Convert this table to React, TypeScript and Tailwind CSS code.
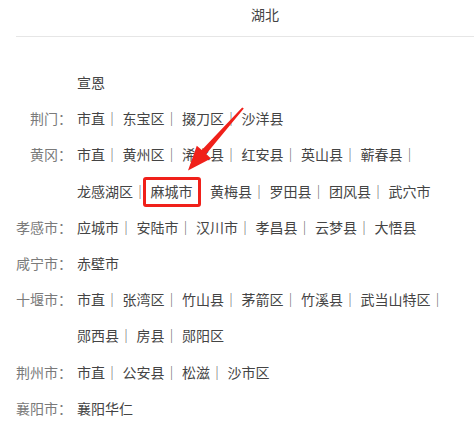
import React from 'react';

interface Region {
  label: string;
  items: string[];
  marked?: string;
}

const regions: Region[] = [
  { label: '', items: ['宣恩'] },
  { label: '荆门：', items: ['市直', '东宝区', '掇刀区', '沙洋县'] },
  {
    label: '黄冈：',
    items: ['市直', '黄州区', '浠水县', '红安县', '英山县', '蕲春县', '龙感湖区', '麻城市', '黄梅县', '罗田县', '团风县', '武穴市'],
    marked: '麻城市',
  },
  { label: '孝感市：', items: ['应城市', '安陆市', '汉川市', '孝昌县', '云梦县', '大悟县'] },
  { label: '咸宁市：', items: ['赤壁市'] },
  { label: '十堰市：', items: ['市直', '张湾区', '竹山县', '茅箭区', '竹溪县', '武当山特区', '郧西县', '房县', '郧阳区'] },
  { label: '荆州市：', items: ['市直', '公安县', '松滋', '沙市区'] },
  { label: '襄阳市：', items: ['襄阳华仁'] },
];

function RegionRow({ region }: { region: Region }) {
  return (
    <div className="flex leading-[36.2px]">
      <div className="w-[56px] shrink-0 text-right text-[#7a7a7a]">{region.label}</div>
      <div className="ml-[5px] flex w-[390px] flex-wrap text-[#444]">
        {region.items.map((item, i) => (
          <span key={item + i} className="relative mr-[3.5px] whitespace-nowrap">
            {item}
            {i < region.items.length - 1 && <span className="text-[#666]">｜</span>}
            {region.marked === item && (
              <span className="absolute left-[-8px] top-[4px] h-[30px] w-[58px] rounded-[3px] border-[3px] border-[#f0201a]" />
            )}
          </span>
        ))}
      </div>
    </div>
  );
}

export default function App() {
  return (
    <div
      className="relative h-[429px] w-[474px] overflow-hidden bg-white text-[14px]"
      style={{ fontFamily: '"Noto Sans CJK SC", "Noto Sans", sans-serif' }}
    >
      <div className="ml-4 w-[498px]">
        <div className="border-b border-[#e6e6e6] pb-[8px] text-center leading-[28px] text-[#444]">湖北</div>
        <div className="mt-[27px]">
          {regions.map((r, i) => (
            <RegionRow key={i} region={r} />
          ))}
        </div>
      </div>

      {/* annotation arrow */}
      <svg className="pointer-events-none absolute left-0 top-0" width="474" height="429" viewBox="0 0 474 429">
        <polygon
          points="242.2,107.4 243.8,108.6 206.2,153.9 211,158.4 188,170.5 196.8,145.8 201.8,150.1"
          fill="#f0201a"
        />
      </svg>
    </div>
  );
}
